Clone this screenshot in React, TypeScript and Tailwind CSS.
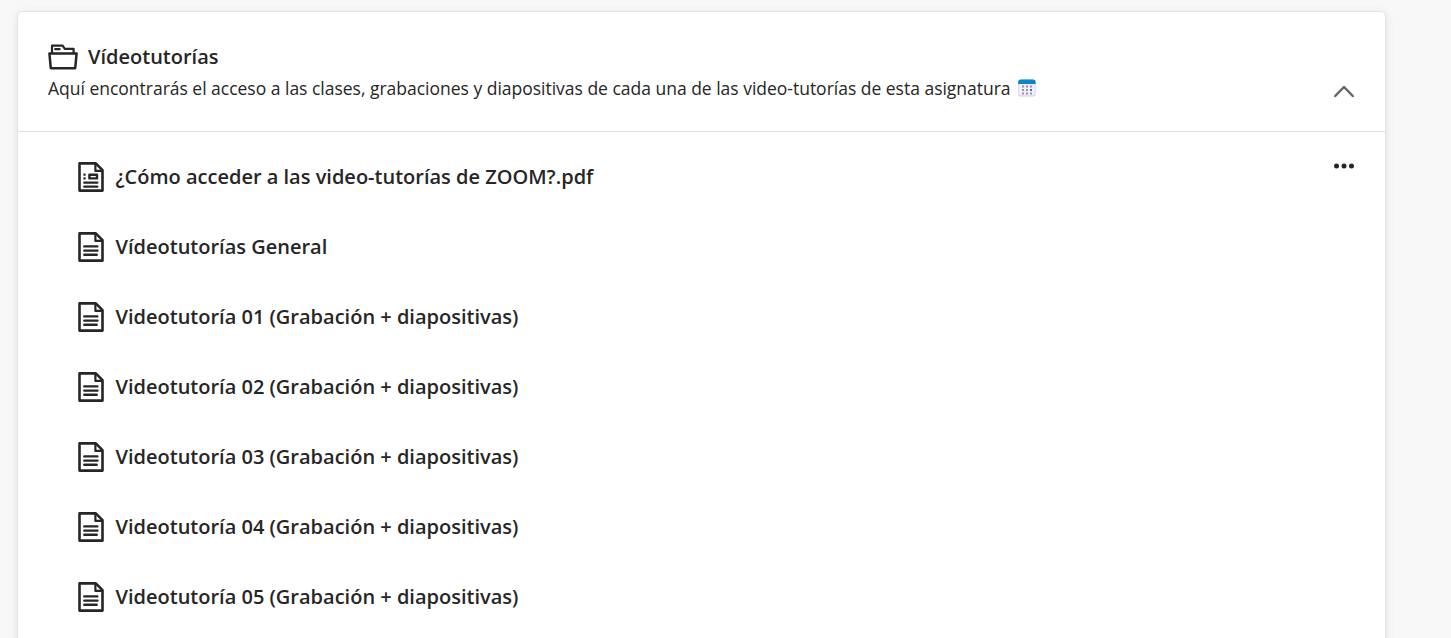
interface ContentItem {
  id: string;
  title: string;
  kind: 'pdf' | 'document';
}

const ITEMS: ContentItem[] = [
  { id: '1', title: '¿Cómo acceder a las video-tutorías de ZOOM?.pdf', kind: 'pdf' },
  { id: '2', title: 'Vídeotutorías General', kind: 'document' },
  { id: '3', title: 'Videotutoría 01 (Grabación + diapositivas)', kind: 'document' },
  { id: '4', title: 'Videotutoría 02 (Grabación + diapositivas)', kind: 'document' },
  { id: '5', title: 'Videotutoría 03 (Grabación + diapositivas)', kind: 'document' },
  { id: '6', title: 'Videotutoría 04 (Grabación + diapositivas)', kind: 'document' },
  { id: '7', title: 'Videotutoría 05 (Grabación + diapositivas)', kind: 'document' },
];

export default function App() {
  return (
    <main className="flex h-screen overflow-hidden bg-[#f8f8f8] pl-[17px] pt-[11px] font-['Open_Sans',sans-serif] text-[#262626]">
      <section className="h-[700px] w-[1369px] shrink-0 rounded-[5px] border border-[#e3e3e3] bg-white shadow-[0_2px_10px_rgba(0,0,0,0.1)]">
        <header className="flex h-[120px] items-start justify-between border-b border-[#e0e0e0] px-[30px] pt-[30px]">
          <div>
            <div className="flex h-[30px] items-center gap-[10px]">
              <FolderIcon />
              <h2 className="text-[20px] font-semibold leading-[30px]">Vídeotutorías</h2>
            </div>
            <p className="flex h-[32px] items-center whitespace-nowrap text-[17.5px] tracking-[-0.012px]">
              Aquí encontrarás el acceso a las clases, grabaciones y diapositivas de cada una de las video-tutorías de esta asignatura
              <CalendarIcon />
            </p>
          </div>
          <button type="button" aria-label="Contraer carpeta" className="mt-[42px]">
            <svg width="22" height="14" viewBox="0 0 22 14" fill="none" className="block">
              <path d="M2.2 12 11 3l8.8 9" stroke="#666" strokeWidth="2.5" strokeLinecap="round" strokeLinejoin="round" />
            </svg>
          </button>
        </header>

        <ul className="px-[30px] pl-[60px] pt-[10px]">
          {ITEMS.map((item) => (
            <li key={item.id} className="flex h-[70px] items-center">
              <DocumentIcon kind={item.kind} />
              <span className="ml-[11.5px] text-[20px] font-semibold leading-[30px]">{item.title}</span>
              {item.kind === 'pdf' && (
                <button type="button" aria-label="Más opciones" className="mb-[22px] ml-auto">
                  <svg width="22" height="6" viewBox="0 0 22 6" fill="#262626" className="block">
                    <circle cx="3.5" cy="3" r="2.5" />
                    <circle cx="11" cy="3" r="2.5" />
                    <circle cx="18.5" cy="3" r="2.5" />
                  </svg>
                </button>
              )}
            </li>
          ))}
        </ul>
      </section>
    </main>
  );
}

function FolderIcon() {
  return (
    <svg width="30" height="30" viewBox="0 0 30 30" fill="none" stroke="#262626" strokeWidth="2.5" strokeLinejoin="round" className="shrink-0">
      <path d="M1.4 11.4h27.2l-1.4 14.8H2.8L1.4 11.4Z" />
      <path d="M4 11.4V3.7h10.6l2.2 3.1h8.8v4.6" strokeWidth="2.2" />
      <path d="M7.2 7.2h4.4" strokeWidth="2.2" strokeLinecap="round" />
    </svg>
  );
}

function DocumentIcon({ kind }: { kind: ContentItem['kind'] }) {
  return (
    <svg width="26" height="30" viewBox="0 0 26 30" fill="none" stroke="#262626" strokeWidth="2.6" strokeLinejoin="round" className="shrink-0">
      <path d="M1.5 1.4h16.3l6.7 6.7v20.5h-23V1.4Z" />
      <path d="M17.4 1.6v7.3h7" strokeWidth="2.2" />
      {kind === 'pdf' ? (
        <>
          <path d="M5.4 12.6h2.2M5.4 16.4h2.2" strokeWidth="2.2" />
          <path d="M11.4 12.8h7.6v3.6h-7.6z" strokeWidth="2.4" />
          <path d="M6.3 20.6h13M6.3 24.6h13" strokeWidth="2.4" strokeLinecap="round" />
        </>
      ) : (
        <path d="M6.3 14.4h13M6.3 18.6h13.2M6.3 22.8h12.4" strokeWidth="2.4" strokeLinecap="round" />
      )}
    </svg>
  );
}

function CalendarIcon() {
  return (
    <svg width="18" height="18" viewBox="0 0 18 18" className="ml-[7.5px] shrink-0">
      <rect x="0.2" y="0.4" width="17.4" height="17.2" rx="2.6" fill="#d3cede" />
      <rect x="1" y="2" width="15.8" height="14.6" rx="1.8" fill="#f3effa" />
      <path d="M0.2 5V3A2.6 2.6 0 0 1 2.8.4H15A2.6 2.6 0 0 1 17.6 3v2Z" fill="#0786cf" />
      <g fill="#9891aa">
        <path d="M4 6.5h2v2H4zM8 6.5h2v2H8zM12 6.5h2v2h-2z" />
        <path d="M4 10h2v2H4zM8 10h2v2H8zM4 13.5h2v2H4zM8 13.5h2v2H8zM12 13.5h2v2h-2z" />
      </g>
      <rect x="12" y="10" width="2" height="2" fill="#0786cf" />
    </svg>
  );
}
